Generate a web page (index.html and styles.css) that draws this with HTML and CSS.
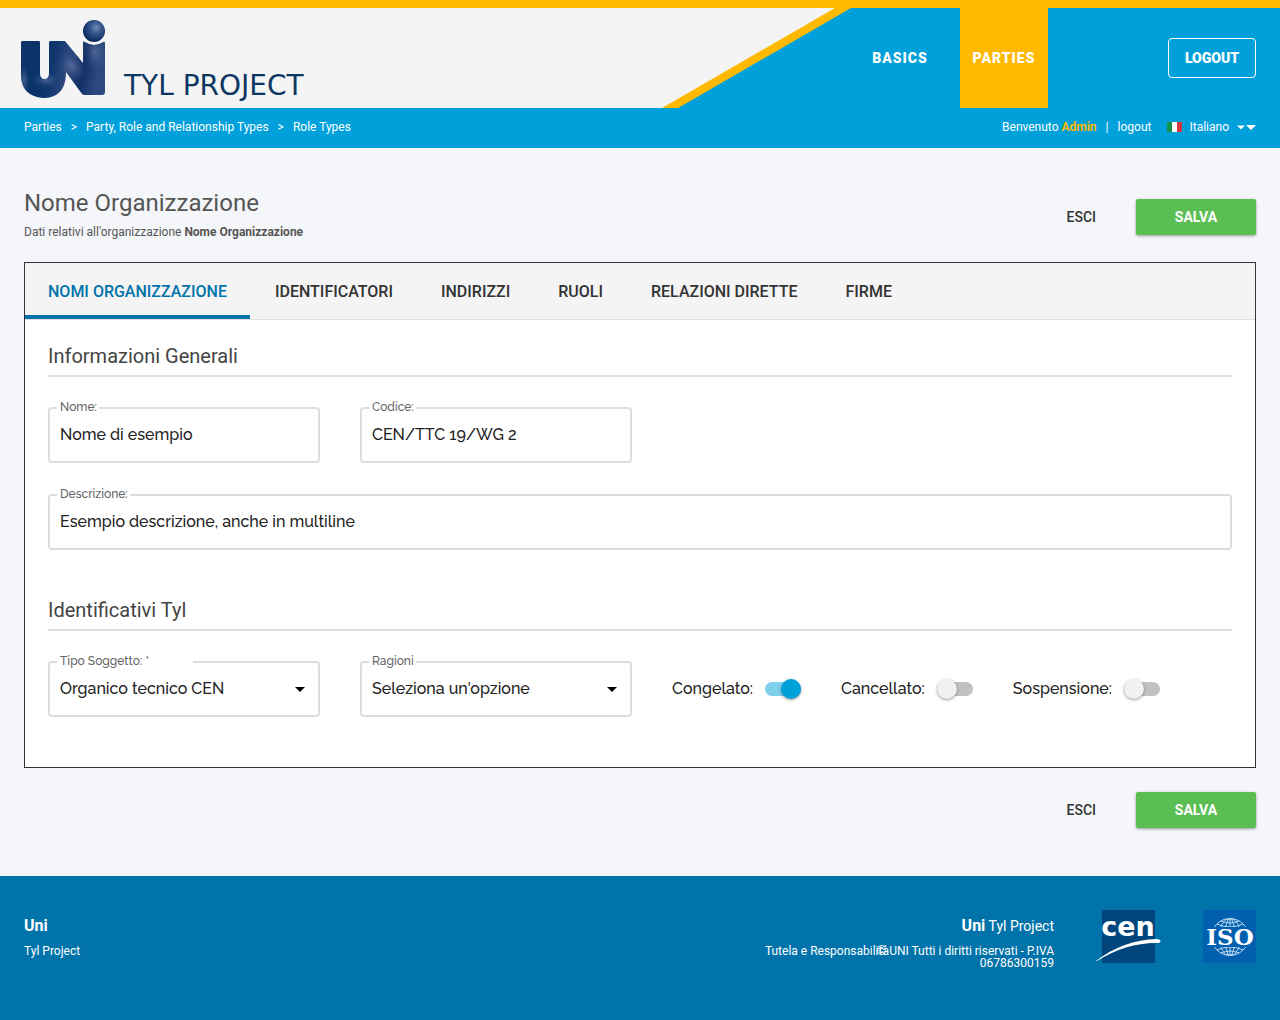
FILE: index.html
```html
<!DOCTYPE html>
<html lang="it">
<head>
<meta charset="utf-8">
<meta name="viewport" content="width=device-width, initial-scale=1">
<title>Nome Organizzazione - Tyl Project</title>
<link rel="stylesheet" href="styles.css">
</head>
<body>
<header>
  <div class="topbar">
    <div class="brand-edge">
      <a class="brand" href="#">
        <svg class="brand-mark" width="86" height="80" viewBox="0 0 86 80" role="img" aria-label="Uni">
          <defs>
            <linearGradient id="body" x1="0" y1="0" x2="1" y2="0.2">
              <stop offset="0" stop-color="#123467"/><stop offset="0.2" stop-color="#0a3267"/>
              <stop offset="0.46" stop-color="#0d366d"/><stop offset="0.64" stop-color="#2c477d"/>
              <stop offset="0.83" stop-color="#122f65"/><stop offset="1" stop-color="#2c4a80"/>
            </linearGradient>
            <radialGradient id="glow"><stop offset="0" stop-color="#7d8cb4" stop-opacity=".55"/><stop offset="1" stop-color="#36548a" stop-opacity="0"/></radialGradient>
            <radialGradient id="ball" cx=".6" cy=".35" r=".65"><stop offset="0" stop-color="#7189b3"/><stop offset=".4" stop-color="#35578d"/><stop offset="1" stop-color="#07285b"/></radialGradient>
            <clipPath id="mark"><path d="M2 21H19Q20 21 20 23V53Q20 59 24.500 59Q29 59 29 53V23Q29 21 30 21H45L63 43V22Q63 21 65 22Q74 28 83 22Q85 21 85 23V72Q85 75 82 75H65Q63 75 62 74L46 52V54Q45 78 23 78Q1 76 1 55V23Q1 21 2 21Z"/></clipPath>
          </defs>
          <g clip-path="url(#mark)">
            <rect width="86" height="80" fill="url(#body)"/>
            <ellipse cx="26" cy="60" rx="14" ry="8" fill="url(#glow)"/>
            <ellipse cx="52" cy="46" rx="13" ry="18" fill="url(#glow)" transform="rotate(-35 52 46)"/>
            <ellipse cx="75" cy="32" rx="13" ry="20" fill="url(#glow)"/>
            <ellipse cx="4" cy="60" rx="6" ry="16" fill="url(#glow)"/>
          </g>
          <circle cx="74" cy="11" r="11" fill="url(#ball)"/>
        </svg>
        <span class="brand-name">TYL PROJECT</span>
      </a>
    </div>
    <nav class="main-nav" aria-label="Principale">
      <a href="#">BASICS</a>
      <a class="current" href="#" aria-current="page">PARTIES</a>
    </nav>
    <button class="logout" type="button">LOGOUT</button>
  </div>
  <div class="subbar">
    <nav class="crumbs" aria-label="Percorso">
      <a href="#">Parties</a><span>&gt;</span><a href="#">Party, Role and Relationship Types</a><span>&gt;</span><a href="#">Role Types</a>
    </nav>
    <div class="user">
      <span>Benvenuto <strong>Admin</strong></span><span>|</span><a href="#">logout</a>
      <button class="language" type="button">
        <svg width="15" height="10" viewBox="0 0 15 10" aria-hidden="true"><path fill="#159349" d="M0 0h5v10H0z"/><path fill="#fff" d="M5 0h5v10H5z"/><path fill="#d43740" d="M10 0h5v10h-5z"/></svg>
        Italiano
        <svg width="20" height="6" viewBox="0 0 20 6" fill="#fff" aria-hidden="true"><path d="M1 1.500h8L5 5.500zM10 1h10l-5 5z"/></svg>
      </button>
    </div>
  </div>
</header>

<main>
  <div class="heading">
    <div>
      <h1>Nome Organizzazione</h1>
      <p>Dati relativi all'organizzazione <strong>Nome Organizzazione</strong></p>
    </div>
    <div class="actions"><button class="exit" type="button">ESCI</button><button class="save" type="submit" form="org">SALVA</button></div>
  </div>

  <form class="card" id="org">
    <nav class="tabs" aria-label="Sezioni">
      <a class="active" href="#" aria-current="true">NOMI ORGANIZZAZIONE</a><a href="#">IDENTIFICATORI</a><a href="#">INDIRIZZI</a><a href="#">RUOLI</a><a href="#">RELAZIONI DIRETTE</a><a href="#">FIRME</a>
    </nav>
    <section>
      <h2>Informazioni Generali</h2>
      <div class="row">
        <div class="field"><label for="nome">Nome:</label><input id="nome" type="text" value="Nome di esempio"></div>
        <div class="field"><label for="codice">Codice:</label><input id="codice" type="text" value="CEN/TTC 19/WG 2"></div>
      </div>
      <div class="field"><label for="descrizione">Descrizione:</label><textarea id="descrizione" rows="1">Esempio descrizione, anche in multiline</textarea></div>
    </section>
    <section>
      <h2>Identificativi Tyl</h2>
      <div class="row">
        <div class="field">
          <label class="wide" for="tipo">Tipo Soggetto: *</label>
          <select id="tipo"><option>Organico tecnico CEN</option></select>
          <svg class="caret" width="10" height="5" viewBox="0 0 10 5" aria-hidden="true"><path d="M0 0h10L5 5z"/></svg>
        </div>
        <div class="field">
          <label for="ragioni">Ragioni</label>
          <select id="ragioni"><option>Seleziona un'opzione</option></select>
          <svg class="caret" width="10" height="5" viewBox="0 0 10 5" aria-hidden="true"><path d="M0 0h10L5 5z"/></svg>
        </div>
        <div class="switches">
          <label>Congelato: <input type="checkbox" checked></label>
          <label>Cancellato: <input type="checkbox"></label>
          <label>Sospensione: <input type="checkbox"></label>
        </div>
      </div>
    </section>
  </form>
  <div class="actions"><button class="exit" type="button">ESCI</button><button class="save" type="submit" form="org">SALVA</button></div>
</main>

<footer>
  <div class="about"><strong>Uni</strong><p>Tyl Project</p></div>
  <div class="legal">
    <div class="legal-name"><strong>Uni</strong> Tyl Project</div>
    <div class="legal-text"><a href="#">Tutela e Responsabilità</a><p>© UNI Tutti i diritti riservati - P.IVA 06786300159</p></div>
  </div>
  <svg class="cen-logo" width="68" height="54" viewBox="0 0 68 54" role="img" aria-label="CEN">
    <path fill="#00457c" d="M7 0h53v53H7z"/>
    <text class="cen" x="33" y="26" text-anchor="middle">cen</text>
    <path fill="#fff" d="M1 51Q28 30 62 29Q68 30 64 33Q32 32 2 51Z"/>
  </svg>
  <svg class="iso-logo" width="53" height="53" viewBox="0 0 53 53" role="img" aria-label="ISO">
    <path fill="#0060af" d="M0 0h53v53H0z"/>
    <g fill="none" stroke="#bdd9ee" stroke-width="1">
      <circle cx="27" cy="27" r="18.500"/><ellipse cx="27" cy="27" rx="11" ry="18.500"/><ellipse cx="27" cy="27" rx="5" ry="18.500"/>
      <path d="M27 8v38M14 14q13 6 26 0M14 40q13-6 26 0M18 11q9 4 18 0M18 43q9-4 18 0"/>
    </g>
    <path fill="#0060af" d="M3 17h48v20H3z"/>
    <text class="iso" x="27" y="35" text-anchor="middle">ISO</text>
  </svg>
</footer>
</body>
</html>
```
FILE: styles.css
```css
* { box-sizing: border-box; }
body {
  margin: 0;
  min-height: 100vh;
  display: flex;
  flex-direction: column;
  background: #f5f6fa;
  color: #333;
  font-family: Roboto, sans-serif;
  font-size: 12px;
}
a { color: inherit; text-decoration: none; }
button { font: inherit; color: inherit; border: 0; background: none; padding: 0; cursor: pointer; }
h1, h2, p { margin: 0; font-weight: 400; }

.topbar {
  display: flex;
  align-items: stretch;
  height: 108px;
  border-top: 8px solid #ffb900;
  background: #00a0db;
  color: #fff;
  font-size: 14px;
  font-weight: 900;
}
.brand-edge {
  flex: 1;
  display: flex;
  padding-right: 16px;
  background: #ffb900;
  clip-path: polygon(0 0, 100% 0, calc(100% - 173px) 100%, 0 100%);
}
.brand {
  flex: 1;
  display: flex;
  align-items: flex-end;
  gap: 18px;
  padding: 0 20px 8px;
  background: #f4f4f4;
  clip-path: polygon(0 0, 100% 0, calc(100% - 173px) 100%, 0 100%);
}
.brand-name { color: #0c3762; font: 28px/28px "DejaVu Sans", sans-serif; white-space: nowrap; }
.main-nav { display: flex; letter-spacing: 1px; }
.main-nav a { display: flex; align-items: center; justify-content: center; width: 88px; margin-left: 5px; }
.main-nav .current { margin-left: 16px; background: #ffb900; }
.logout {
  align-self: center;
  width: 88px;
  height: 40px;
  margin: 0 24px 0 120px;
  border: 1px solid #fff;
  border-radius: 4px;
}
.subbar {
  display: flex;
  justify-content: space-between;
  height: 40px;
  padding: 0 24px 2px;
  background: #00a0db;
  color: #fff;
}
.crumbs, .user, .language { display: flex; align-items: center; }
.crumbs, .user { gap: 9px; }
.user strong { color: #ffb900; font-weight: 700; }
.language { gap: 7px; margin-left: 7px; }

main { padding: 40px 24px 48px; }
.heading { display: flex; justify-content: space-between; height: 74px; }
h1 { color: #555; font-size: 24px; line-height: 30px; }
.heading p { margin-top: 6px; line-height: 16px; color: #555; }
.actions { display: flex; justify-content: flex-end; align-items: flex-start; }
.heading .actions { padding-top: 11px; }
.actions button { height: 36px; font-size: 14px; font-weight: 500; }
.exit { padding: 0 40px; }
.actions .save {
  width: 120px;
  border-radius: 2px;
  background: #5abe53;
  color: #fff;
  font-weight: 700;
  box-shadow: 0 1px 3px rgba(0, 0, 0, .4);
}

.card { margin-bottom: 24px; padding-bottom: 50px; border: 1px solid #333; background: #fff; }
.tabs {
  display: flex;
  gap: 2px;
  height: 57px;
  border-bottom: 1px solid #e0e0e0;
  background: #f4f4f4;
  font-size: 16px;
  font-weight: 500;
  line-height: 58px;
}
.tabs a { height: 56px; padding: 0 23px; white-space: nowrap; }
.tabs .active { color: #0073aa; box-shadow: inset 0 -4px #0073aa; }
section { padding: 20px 23px 0; }
section + section { padding-top: 44px; }
h2 { margin-bottom: 30px; padding-bottom: 3px; border-bottom: 2px solid #ddd; color: #444; font-size: 20px; line-height: 32px; }
.row { display: flex; gap: 40px; }
.row + .field { margin-top: 31px; }
.field { position: relative; font-family: Raleway, Lato, sans-serif; }
.row .field { width: 272px; }
.field label {
  position: absolute;
  top: -8px;
  left: 9px;
  padding: 0 2px 0 3px;
  background: #fff;
  color: #666;
  font-size: 12px;
  font-weight: 500;
  line-height: 16px;
}
.field .wide { width: 136px; }
input[type="text"], textarea, select {
  display: block;
  width: 100%;
  height: 56px;
  padding: 0 10px;
  border: 2px solid #ddd;
  border-radius: 4px;
  background: #fff;
  color: #222;
  font: 500 16px/20px Raleway, Lato, sans-serif;
  appearance: none;
}
input[type="text"] { padding-bottom: 2px; }
textarea { padding-top: 16px; resize: none; overflow: hidden; }
.caret { position: absolute; top: 26px; right: 15px; pointer-events: none; }
.switches { display: flex; align-items: center; gap: 40px; font: 500 16px/20px Raleway, Lato, sans-serif; }
.switches label { display: flex; align-items: center; gap: 12px; white-space: nowrap; color: #222; }
.switches input {
  display: flex;
  align-items: center;
  appearance: none;
  width: 36px;
  height: 14px;
  margin: 0;
  border-radius: 7px;
  background: #c1c1c1;
}
.switches input::before {
  content: "";
  width: 20px;
  height: 20px;
  flex: none;
  border-radius: 50%;
  background: #f1f1f1;
  box-shadow: 0 1px 3px rgba(0, 0, 0, .4);
}
.switches input:checked { justify-content: flex-end; background: #7fcfed; }
.switches input:checked::before { background: #00a0db; }

footer {
  flex: 1;
  display: flex;
  align-items: flex-start;
  padding: 34px 24px;
  background: #0073aa;
  color: #fff;
}
.about { flex: 1; line-height: 16px; }
.about strong, .legal strong { font-size: 16px; }
.about strong { display: block; margin: 8px 0 9px; }
.legal { margin-right: 41px; text-align: right; }
.legal-name { padding-top: 7px; font-size: 14px; line-height: 18px; }
.legal-text { display: flex; margin-top: 10px; line-height: 12px; }
.legal-text p { width: 180px; margin-left: -15px; }
.cen-logo { overflow: visible; }
.cen { fill: #fff; font: 700 27px "DejaVu Sans", sans-serif; }
.iso { fill: #fff; font: 700 23px "DejaVu Serif", serif; }
.iso-logo { margin-left: 40px; }
```
